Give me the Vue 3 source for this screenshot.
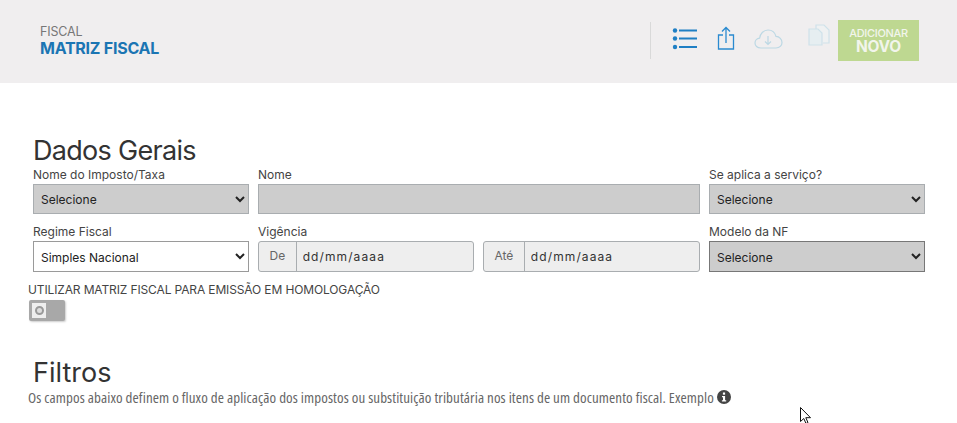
<script setup>
</script>

<template>
  <div class="page">
    <header class="topbar">
      <div class="crumbs">
        <div class="crumb-parent">FISCAL</div>
        <div class="crumb-title">MATRIZ FISCAL</div>
      </div>
      <div class="tools">
        <span class="divider"></span>
        <svg class="ic-list" width="26" height="22" viewBox="0 0 26 22">
          <circle cx="3" cy="2.500" r="2.2" fill="#1f7fc4" />
          <circle cx="3" cy="10.500" r="2.2" fill="#1f7fc4" />
          <circle cx="3" cy="19" r="2.2" fill="#1f7fc4" />
          <path d="M7 2.500h18M7 10.500h18M7 19h18" stroke="#1f7fc4" stroke-width="2" fill="none" />
        </svg>
        <svg class="ic-share" width="18" height="24" viewBox="0 0 18 24">
          <path d="M6 9H1.500v14h15V9H12" stroke="#2a8ad0" stroke-width="1.300" fill="none" />
          <path d="M9 17V1.500M5 5.500l4-4 4 4" stroke="#2a8ad0" stroke-width="1.300" fill="none" />
        </svg>
        <svg class="ic-cloud" width="29" height="20" viewBox="0 0 29 20">
          <path d="M7 19C3 19 1 16.500 1 14s2-4.600 4.600-4.800C6 5 9.500 1 14 1c4 0 7 2.600 8 6.400 3.500.2 6 3 6 6 0 3.100-2.500 5.600-6 5.600z" stroke="#bcd8e4" stroke-width="1.200" fill="none" />
          <path d="M14 7v8M11 12.500l3 3 3-3" stroke="#bcd8e4" stroke-width="1.200" fill="none" />
        </svg>
        <svg class="ic-copy" width="22" height="22" viewBox="0 0 22 22">
          <path d="M8 5V1h8l5 5v13h-6" stroke="#cfe2ea" stroke-width="1.200" fill="#eff1f2" />
          <path d="M1 5h9l4 4v12H1z" stroke="#cfe2ea" stroke-width="1.200" fill="#e6eef1" />
        </svg>
        <button class="add-btn" type="button">
          <span class="add-small">ADICIONAR</span>
          <span class="add-big">NOVO</span>
        </button>
      </div>
    </header>

    <main class="content">
      <h2 class="section-title first">Dados Gerais</h2>
      <div class="form-grid">
        <label class="field">
          <span class="lbl">Nome do Imposto/Taxa</span>
          <select class="ctl gray"><option>Selecione</option></select>
        </label>
        <label class="field">
          <span class="lbl">Nome</span>
          <input class="ctl gray" type="text" />
        </label>
        <label class="field">
          <span class="lbl">Se aplica a serviço?</span>
          <select class="ctl gray"><option>Selecione</option></select>
        </label>

        <label class="field">
          <span class="lbl">Regime Fiscal</span>
          <select class="ctl white"><option>Simples Nacional</option></select>
        </label>
        <div class="field">
          <span class="lbl">Vigência</span>
          <div class="dates">
            <div class="date-group">
              <span class="addon">De</span>
              <input class="date-input" type="text" value="dd/mm/aaaa" />
            </div>
            <div class="date-group">
              <span class="addon">Até</span>
              <input class="date-input" type="text" value="dd/mm/aaaa" />
            </div>
          </div>
        </div>
        <label class="field">
          <span class="lbl">Modelo da NF</span>
          <select class="ctl gray dark"><option>Selecione</option></select>
        </label>
      </div>

      <div class="homolog">UTILIZAR MATRIZ FISCAL PARA EMISSÃO EM HOMOLOGAÇÃO</div>
      <div class="toggle"><span class="knob"><span class="ring"></span></span></div>

      <h2 class="section-title second">Filtros</h2>
      <p class="desc">
        <span class="desc-text">Os campos abaixo definem o fluxo de aplicação dos impostos ou substituição tributária nos itens de um documento fiscal. Exemplo</span>
        <svg class="info" width="14" height="14" viewBox="0 0 14 14">
          <circle cx="7" cy="7" r="7" fill="#444" />
          <rect x="5.900" y="2.500" width="2.200" height="2.200" fill="#fff" />
          <path d="M5 6h3.100v4.200H9.200v1.300H4.900v-1.300H6V7.300H5z" fill="#fff" />
        </svg>
      </p>
    </main>

    <svg class="cursor" width="12" height="17" viewBox="0 0 12 17">
      <path d="M.5.500v14l3.300-3 2.200 5 2-.9-2.200-4.900h4.700z" fill="#fff" stroke="#111" stroke-width="1" />
    </svg>
  </div>
</template>

<style scoped>
.page {
  position: relative;
  width: 957px;
  height: 423px;
  overflow: hidden;
  background: #fff;
  font-family: "Inter", "Liberation Sans", sans-serif;
  color: #333;
}
.topbar {
  height: 83px;
  background: #f0eeef;
  display: flex;
  justify-content: space-between;
  box-sizing: border-box;
  padding: 24px 38px 0 40px;
}
.crumb-parent {
  font-size: 12.500px;
  line-height: 15px;
  color: #777;
  letter-spacing: -0.15px;
}
.crumb-title {
  font-size: 16px;
  line-height: 19px;
  font-weight: 700;
  color: #1b75b3;
  letter-spacing: -0.25px;
}
.tools {
  display: flex;
  align-items: flex-start;
  height: 41px;
  margin-top: -4px;
}
.divider {
  width: 1px;
  height: 37px;
  margin-top: 2px;
  background: #d9d9d9;
  margin-right: 21px;
}
.ic-list { margin-top: 8px; margin-right: 19px; }
.ic-share { margin-top: 6px; margin-right: 19px; }
.ic-cloud { margin-top: 9px; margin-right: 25px; }
.ic-copy { margin-top: 4px; margin-right: 8px; }
.add-btn {
  width: 81px;
  height: 41px;
  border: 0;
  padding: 0;
  background: #bed891;
  color: #f2f5ec;
  display: flex;
  flex-direction: column;
  align-items: center;
  justify-content: center;
  font-family: inherit;
}
.add-small { font-size: 11px; line-height: 13px; font-weight: 500; letter-spacing: -0.35px; }
.add-big { font-size: 15.500px; line-height: 14px; font-weight: 700; letter-spacing: -0.2px; }

.content { padding: 0 32px 0 33px; }
.section-title {
  margin: 0;
  font-size: 27px;
  font-weight: 400;
  line-height: 32px;
  color: #333;
}
.section-title.first { padding-top: 52px; letter-spacing: -0.7px; height: 32px; }
.section-title.second { margin-top: 36px; }
.form-grid {
  display: grid;
  grid-template-columns: 216px 442px 216px;
  column-gap: 9px;
  row-gap: 10px;
}
.field { display: flex; flex-direction: column; min-width: 0; }
.lbl {
  font-size: 12px;
  line-height: 15px;
  color: #444;
  height: 17px;
}
.ctl {
  width: 100%;
  height: 30.400px;
  box-sizing: border-box;
  margin: 0;
  font-family: inherit;
  font-size: 12px;
  color: #222;
  padding: 1px 3px 0;
  border: 1px solid #a9adb0;
  border-radius: 0;
}
.gray { background: #cdcdcd; }
.white { background: #fff; border-color: #9a9a9a; }
.dark { border-color: #777; }
.dates { display: grid; grid-template-columns: 216px 217px; gap: 9px; }
.date-group {
  min-width: 0;
  height: 30.400px;
  display: flex;
  box-sizing: border-box;
  border: 1px solid #a9adb0;
  border-radius: 3px;
  background: #eee;
}
.addon {
  flex: none;
  padding: 0 10.500px;
  line-height: 28px;
  font-size: 12px;
  color: #666;
  border-right: 1px solid #a9adb0;
}
.date-input {
  flex: 1 1 0;
  min-width: 0;
  width: 0;
  border: 0;
  background: transparent;
  font-family: inherit;
  font-size: 12px;
  letter-spacing: 1.1px;
  color: #333;
  padding: 0 6px;
}
.homolog {
  margin: 9px 0 0 -5px;
  font-size: 12px;
  line-height: 17px;
  color: #444;
  letter-spacing: -0.13px;
  white-space: nowrap;
}
.toggle {
  width: 36px;
  height: 21.500px;
  margin: 2px 0 0 -4px;
  background: #a8a8a8;
  border-radius: 2px;
  box-shadow: 1px 1px 2px #ccc;
  display: flex;
  align-items: center;
  padding-left: 3px;
  box-sizing: border-box;
}
.knob {
  width: 14px;
  height: 15px;
  background: #eee;
  display: flex;
  align-items: center;
  justify-content: center;
}
.ring {
  width: 9px;
  height: 9px;
  box-sizing: border-box;
  border: 2px solid #999;
  border-radius: 50%;
  background: #ddd;
}
.desc {
  margin: -1px 0 0 -5px;
  font-family: "Open Sans", "Roboto", sans-serif;
  font-stretch: 75%;
  font-size: 15px;
  letter-spacing: 0.1px;
  line-height: 18px;
  color: #666;
  white-space: nowrap;
}
.info { vertical-align: -1px; margin-left: 3px; }
.cursor { position: absolute; left: 800px; top: 407px; }
</style>
